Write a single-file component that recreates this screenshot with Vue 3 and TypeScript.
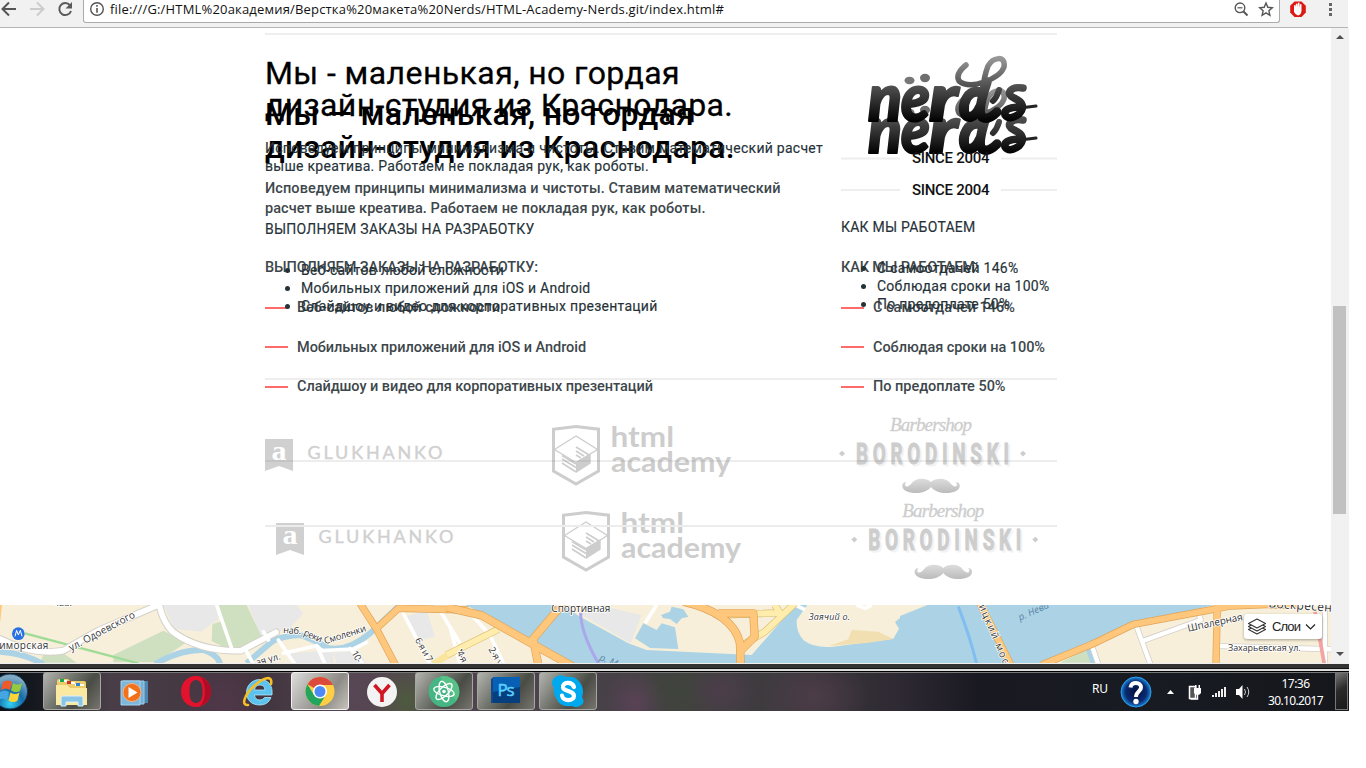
<script setup lang="ts">
interface Line { text: string; width: number }

// Spreads a line of text over an exact width by adjusting its letter spacing.
const vFit = {
  mounted(el: HTMLElement, binding: { value: number }) {
    const natural = el.getBoundingClientRect().width
    const count = (el.textContent ?? '').length
    el.style.letterSpacing = `${(binding.value - natural) / count}px`
  },
}

const address = 'file:///G:/HTML%20академия/Верстка%20макета%20Nerds/HTML-Academy-Nerds.git/index.html#'

const title: Line[] = [
  { text: 'Мы - маленькая, но гордая', width: 415 },
  { text: 'дизайн-студия из Краснодара.', width: 468 },
]
const intro: Line[] = [
  { text: 'Исповедуем принципы минимализма и чистоты. Ставим математический расчет', width: 558 },
  { text: 'выше креатива. Работаем не покладая рук, как роботы.', width: 384 },
]
const services: Line[] = [
  { text: 'Веб-сайтов любой сложности', width: 203 },
  { text: 'Мобильных приложений для iOS и Android', width: 289.5 },
  { text: 'Слайдшоу и видео для корпоративных презентаций', width: 356.5 },
]
const rules: Line[] = [
  { text: 'С самоотдачей 146%', width: 141.5 },
  { text: 'Соблюдая сроки на 100%', width: 172.5 },
  { text: 'По предоплате 50%', width: 132.5 },
]
const draftTitle: Line[] = [
  { text: 'Мы — маленькая, но гордая', width: 429 },
  { text: 'дизайн-студия из Краснодара.', width: 470 },
]
const draftIntro: Line[] = [
  { text: 'Исповедуем принципы минимализма и чистоты. Ставим математический', width: 515.5 },
  { text: 'расчет выше креатива. Работаем не покладая рук, как роботы.', width: 440.5 },
]
const draftServices: Line[] = [
  { text: 'Веб-сайтов любой сложности', width: 203 },
  { text: 'Мобильных приложений для iOS и Android', width: 289 },
  { text: 'Слайдшоу и видео для корпоративных презентаций', width: 356 },
]
const draftRules: Line[] = [
  { text: 'С самоотдачей 146%', width: 142 },
  { text: 'Соблюдая сроки на 100%', width: 172 },
  { text: 'По предоплате 50%', width: 132.5 },
]
const partnerRows = [
  { g: 'translate(0 0)', h: 'translate(0 0)', b: 'translate(0 0)' },
  { g: 'translate(11 84)', h: 'translate(10 86)', b: 'translate(12.3 86)' },
]
const tasks = [
  { id: 'explorer', state: 'open' },
  { id: 'player', state: '' },
  { id: 'opera', state: '' },
  { id: 'ie', state: '' },
  { id: 'chrome', state: 'active' },
  { id: 'yandex', state: '' },
  { id: 'atom', state: 'open' },
  { id: 'ps', state: 'open' },
  { id: 'skype', state: 'open' },
]
</script>

<template>
  <div class="screen">
    <header class="toolbar">
      <svg class="nav" width="83" height="28" viewBox="0 0 83 28" fill="none" stroke-width="2">
        <path d="M16 9H3M9 2.5 2.5 9 9 15.5" stroke="#555" />
        <path d="M30 9h13M37 2.5 43.5 9 37 15.5" stroke="#ccc" />
        <path d="M70 5.3A6 6 0 1 0 71 11" stroke="#5a5a5a" />
        <path d="M72 2v6.500h-6.500z" fill="#5a5a5a" />
      </svg>
      <div class="omnibox">
        <svg width="26" height="22" viewBox="0 0 26 22" fill="none" stroke="#555">
          <circle cx="13" cy="9" r="6.300" stroke-width="1.400" />
          <path d="M13 8v4.800M13 5v1.700" stroke-width="1.600" />
        </svg>
        <span v-fit="614" class="address">{{ address }}</span>
        <svg class="page-tools" width="50" height="22" viewBox="1230 0 50 22" fill="none" stroke="#555">
          <circle cx="1240" cy="7.800" r="4.800" stroke-width="1.400" />
          <path d="M1243.500 11.500l4 4" stroke-width="2" />
          <path d="M1237.500 7.800h5" stroke-width="1.200" />
          <path d="M1266 3l1.800 4.300 4.500.4-3.400 3.100 1 4.500-3.900-2.400-3.900 2.400 1-4.500-3.400-3.100 4.500-.4z" stroke-width="1.400" />
        </svg>
      </div>
      <svg width="68" height="27" viewBox="1280 0 68 27">
        <path d="M1294.500 1.500h7l4.300 4.300v6.800l-4.300 4.300h-7l-4.300-4.300V5.800z" fill="#dd1712" />
        <path d="M1294 9V5.500q1-1 1.500 0V8l.4-4q1-1 1.500 0v4l.5-5q1-1 1.600 0v5l.5-3.500q1-.8 1.500 0V11q-.5 4-3.500 4.500-2.500-.5-4-3.500z" fill="#fff" />
        <path d="M1329 3h3v3h-3zM1329 8h3v3h-3zM1329 13h3v3h-3z" fill="#666" />
      </svg>
    </header>

    <div class="viewport">
      <main class="page">
        <div class="live">
          <hr class="rule" />
          <div class="columns">
            <section>
              <h1><span v-for="l in title" :key="l.text" v-fit="l.width" class="line">{{ l.text }}</span></h1>
              <p><span v-for="l in intro" :key="l.text" v-fit="l.width" class="line">{{ l.text }}</span></p>
              <h2><span v-fit="269.500" class="line">ВЫПОЛНЯЕМ ЗАКАЗЫ НА РАЗРАБОТКУ</span></h2>
              <ul><li v-for="l in services" :key="l.text"><span v-fit="l.width" class="line">{{ l.text }}</span></li></ul>
            </section>
            <section>
              <svg class="brand" width="216" height="183" viewBox="841 35 216 183">
                <defs>
                  <linearGradient id="ink" gradientUnits="userSpaceOnUse" x1="0" y1="57" x2="0" y2="122">
                    <stop offset="0" stop-color="#999" />
                    <stop offset=".45" stop-color="#505050" />
                    <stop offset="1" stop-color="#000" />
                  </linearGradient>
                </defs>
                <path d="M841 158.500h59M1001 158.500h56M841 190h59M1001 190h56" stroke="#eee" stroke-width="2" />
                <g v-for="dy in [32, 0]" :key="dy" :transform="`translate(0 ${dy})`" fill="url(#ink)" stroke="url(#ink)">
                  <g class="script-letters" stroke-width="2.200" stroke-linejoin="round">
                    <text x="868" y="121" textLength="34" lengthAdjust="spacingAndGlyphs">n</text>
                    <text x="901" y="121" textLength="29" lengthAdjust="spacingAndGlyphs">e</text>
                    <text x="929" y="121" textLength="29" lengthAdjust="spacingAndGlyphs">r</text>
                  </g>
                  <ellipse cx="909.500" cy="80.500" rx="5" ry="3.800" stroke="none" fill="#777" />
                  <ellipse cx="925" cy="78" rx="5" ry="4.200" stroke="none" fill="#6e6e6e" />
                  <g fill="none" stroke-linecap="round" stroke-linejoin="round">
                    <path d="M979 92C967 90 963 104 964 111C966 121 975 118 980 107" stroke-width="10" />
                    <path d="M987 82C982 97 978 112 982 117Q988 121 997 112" stroke-width="9.500" />
                    <path d="M966 65Q955 74 959 81Q968 88 984 82Q1001 76 1004 67C1006 55 993 57 988 66Q984 76 982 94" stroke-width="5.500" />
                    <path d="M999 90Q997 97 993 101" stroke-width="6" />
                    <path d="M1023 88C1010 86 1005 94 1014 98Q1028 104 1019 114Q1009 121 1005 115Q1003 108 1018 107" stroke-width="7.500" />
                    <path d="M1012 108Q1024 108 1036 106" stroke-width="3" />
                  </g>
                </g>
                <g class="since">
                  <text x="912" y="163.300" textLength="77.500">SINCE 2004</text>
                  <text x="912" y="194.500" textLength="77.500">SINCE 2004</text>
                </g>
              </svg>
              <h2><span v-fit="134.500" class="line">КАК МЫ РАБОТАЕМ</span></h2>
              <ul><li v-for="l in rules" :key="l.text"><span v-fit="l.width" class="line">{{ l.text }}</span></li></ul>
            </section>
          </div>
          <hr class="rule rule-partners" />
          <svg class="partners" width="800" height="225" viewBox="257 380 800 225">
            <defs>
              <linearGradient id="hair" x1="0" y1="0" x2="0" y2="1">
                <stop offset="0" stop-color="#dcdcdc" /><stop offset="1" stop-color="#bbb" />
              </linearGradient>
            </defs>
            <g v-for="(row, i) in partnerRows" :key="i">
              <g :transform="row.g" fill="#d0d0d0">
                <path d="M265 439h28v32l-14-5-14 5z" />
                <text class="flag-letter" x="271.500" y="459.500" textLength="15" lengthAdjust="spacingAndGlyphs">a</text>
                <text class="wide-name" x="307.500" y="459" textLength="135">GLUKHANKO</text>
              </g>
              <g :transform="row.h" fill="#cdcdcd" stroke="#cdcdcd">
                <path d="M553.500 429.200 576 426.500l22.500 2.700v41.900L576 484l-22.500-12.900z" fill="none" stroke-width="3" />
                <path d="M554.500 449.500 576 436l21.500 13.500L576 462.500z" fill="none" stroke-width="1.300" />
                <path d="M576 462l14.700-8.500v10L576 473z" stroke="none" />
                <path d="M562 455.500l14 8.500M562 459l14 8.500M562 463l14 9M576 447l14 8.500M576 451l8 5M576 455l5 3" fill="none" stroke-width="1.700" />
                <g class="academy" stroke="none">
                  <text x="610.500" y="447" textLength="63.500" lengthAdjust="spacingAndGlyphs">html</text>
                  <text x="611" y="471.700" textLength="120" lengthAdjust="spacingAndGlyphs">academy</text>
                </g>
              </g>
              <g :transform="row.b" fill="#cdcdcd">
                <text class="barber" x="890" y="430.500" textLength="82">Barbershop</text>
                <text class="barber-name echo" transform="translate(858 466) scale(.64 1)" textLength="239">BORODINSKI</text>
                <text class="barber-name" transform="translate(856 464) scale(.64 1)" textLength="239">BORODINSKI</text>
                <path d="M842 450.800l3 2.800-3 2.800-3-2.800zM1023 450.800l3 2.800-3 2.800-3-2.800z" />
                <path d="M931 482C926 478 916 477 911 484C908 488 903 487 906 482C901 482 901 489 906 491C914 495 927 493 931 487C935 493 948 495 956 491C961 489 961 482 956 482C959 487 954 488 951 484C946 477 936 478 931 482Z" fill="url(#hair)" />
              </g>
            </g>
            <path d="M265 461h792" stroke="#777" stroke-opacity=".13" stroke-width="2" />
            <path d="M265 526h792" stroke="#ececec" stroke-width="2" />
          </svg>
        </div>

        <div class="draft">
          <section>
            <h1><span v-for="l in draftTitle" :key="l.text" v-fit="l.width" class="line">{{ l.text }}</span></h1>
            <p><span v-for="l in draftIntro" :key="l.text" v-fit="l.width" class="line">{{ l.text }}</span></p>
            <h2><span v-fit="273" class="line">ВЫПОЛНЯЕМ ЗАКАЗЫ НА РАЗРАБОТКУ:</span></h2>
            <ul><li v-for="l in draftServices" :key="l.text"><i></i><span v-fit="l.width" class="line">{{ l.text }}</span></li></ul>
          </section>
          <section class="draft-side">
            <h2><span v-fit="137.500" class="line">КАК МЫ РАБОТАЕМ:</span></h2>
            <ul><li v-for="l in draftRules" :key="l.text"><i></i><span v-fit="l.width" class="line">{{ l.text }}</span></li></ul>
          </section>
        </div>

        <div class="map">
          <svg width="1331" height="58" viewBox="0 15 3993 174" fill="none" stroke-linejoin="round">
            <path d="M0 15h3993v174H0z" fill="#f7efd9" />
            <g>
              <path d="M490 15h160l5 45-22 12-30 23-80-8zM745 15h145l20 25-40 45-85 30zM870 160l130-10v40H880zM1215 50l65-20 25 80-50 10zM1000 160l70-10 30 40h-90z" fill="#e8e8e8" />
              <path d="M650 15h90l45 95-50 40-50-2-50-25 2-50 28-10zM340 165l150-73 70 35-90 60H340zM130 165l60-5 40 28H120z" fill="#cfe0c0" />
              <path d="M0 155q75 5 130 38M465 192q80-45 145-42 45 15 50 42M740 190l70-60q20-20 90-25 45 15 85 40 60 10 125-45l90-85" stroke="#abd3e5" stroke-width="18" />
              <path d="M75 100 415 190" stroke="#9edb96" stroke-width="7" />
              <g stroke-linecap="round">
                <g stroke="#d4d1ca" stroke-width="23"><path d="M0 117q100 50 190 35 50-30 105-60l175-75M478 15q10 50 40 80 80 60 205 57l105-55" /></g>
                <g stroke="#fff" stroke-width="17"><path d="M0 117q100 50 190 35 50-30 105-60l175-75M478 15q10 50 40 80 80 60 205 57l105-55" /></g>
                <path d="M650 15l45 130M740 155l20 38M835 120l50 73M850 160l100-23 15 15 95-5 40-20M950 137l25 55M1050 145l40 48M1205 30l85 163M1310 15l70 115M790 95l15 25" stroke="#fff" stroke-width="11" />
              </g>
              <path d="M1080 10l50 78 58 110M1130 85l65-60 210 5" stroke="#dfa457" stroke-width="22" />
              <path d="M1080 10l50 78 58 110M1130 85l65-60 210 5" stroke="#ffc77c" stroke-width="18" />
              <path d="M1300 192l90-55" stroke="#f9e59b" stroke-width="20" />
              <path d="M0 70V15h6z" fill="#ffc77c" />
            </g>
            <g transform="translate(1350 0)">
              <path d="M35 10h1345v182H370L240 120 120 50z" fill="#abd3e5" />
              <path d="M330 10h710L905 165 590 150 535 130 390 50zM1075 10l-35 50q-2 35 20 60 30 25 90 20l180-24 17-30-12-20 45-36V10z" fill="#f7efd9" />
              <path d="M390 42 440 15l135 30-33 85z" fill="#e8e8e8" />
              <path d="M555 115l25-45 40 20 15-20 40 12 10 65-85-3zM633 45l27-10 5-15 35 8 15 22-20 5-15 17-20-15-20-2z" fill="#abd3e5" />
              <path d="M1135 138l60-20 10-28 80 5 45 22-80 12z" fill="#f1dfb2" />
              <path d="M0 80l30 112M65 45l55 60 40 85M620 15l-35 55M1220 15l25 10 20-10M1035 15l30 14" stroke="#fff" stroke-width="11" />
              <path d="M-10 165 145 88M815 45l180-7M1035 10 945 95l-75 45M975 15l15 25" stroke="#d9c077" stroke-width="22" />
              <path d="M-10 165 145 88M815 45l180-7M1035 10 945 95l-75 45M975 15l15 25" stroke="#ffedae" stroke-width="18" />
              <path d="M-10 22l105 24 145 82 135 75M242 125l98-115M250 120l15 75M700 5q150 35 170 125l2 65M805 40h105l4 70-45 45" stroke="#dfa457" stroke-width="25" />
              <path d="M-10 22l105 24 145 82 135 75M242 125l98-115M250 120l15 75M700 5q150 35 170 125l2 65M805 40h105l4 70-45 45" stroke="#ffc77c" stroke-width="21" />
              <path d="M392 38q0 60 55 155" stroke="#aaa7eb" stroke-width="9" />
            </g>
            <g transform="translate(2700 0)">
              <path d="M0 10h960L700 75 425 192H0z" fill="#abd3e5" />
              <path d="M0 10h95L45 30 0 48z" fill="#f7efd9" />
              <path d="M480 188l75-38 20 38z" fill="#cfe0c0" />
              <path d="M175 20q35 90 55 172" stroke="#82bdf0" stroke-width="9" />
              <path d="M553 140l20 52h25l-25-60z" fill="#abd3e5" />
              <path d="M575 135l20 58M710 80l42 115M722 125l180-65-10-30M960 138l340 10M1275 25v165" stroke="#d4d1ca" stroke-width="18" />
              <path d="M575 135l20 58M710 80l42 115M722 125l180-65-10-30M960 138l340 10M1275 25v165" stroke="#fff" stroke-width="13" />
              <path d="M240 10l95 190M425 195l150-62 125-60 240-45 50-10 190-8M952 10l-4 185M1110 15h80" stroke="#dfa457" stroke-width="22" />
              <path d="M240 10l95 190M425 195l150-62 125-60 240-45 50-10 190-8M952 10l-4 185M1110 15h80" stroke="#ffc77c" stroke-width="18" />
              <path d="M1245 35l28 158" stroke="#f4a3a0" stroke-width="11" />
            </g>
            <circle cx="55" cy="101" r="19" fill="#2871e3" />
            <path d="M45 109l5-18 5 14 6-14 5 18" stroke="#fff" stroke-width="3" />
            <g class="map-labels">
              <text x="-22" y="146" textLength="167">риморская</text>
              <text x="160" y="18" font-size="28">чва.</text>
              <text transform="translate(213 154) rotate(-28)" textLength="220">ул. Одоевского</text>
              <g font-size="28">
                <text transform="translate(849 99) rotate(4)" textLength="54">наб.</text>
                <text transform="translate(909 105) rotate(23)" textLength="58">реки</text>
                <text transform="translate(976 133) rotate(-18)" textLength="130">Смоленки</text>
                <text transform="translate(770 197) rotate(-15)" textLength="76">ая ул.</text>
                <text transform="translate(1054 158) rotate(62)" textLength="36">10-</text>
                <text transform="translate(1244 120) rotate(60)" textLength="78">6-я и 7</text>
                <text x="1374" y="168">4</text>
                <text transform="translate(1370 158) rotate(62)" textLength="36">4-я</text>
                <text transform="translate(1465 148) rotate(60)" textLength="58">2-я у</text>
              </g>
              <text x="1654" y="35" textLength="177">Спортивная</text>
              <text x="2426" y="60" font-style="italic" font-size="27" textLength="124">Заячий о.</text>
              <g class="water-label">
                <text transform="translate(1796 180) rotate(22)">р. Мойка</text>
                <text transform="translate(3060 62) rotate(-24)">р. Нева</text>
              </g>
              <text transform="translate(2936 18) rotate(67)" textLength="190">ицкий мос</text>
              <text transform="translate(3565 95) rotate(-12)" textLength="168">Шпалерная</text>
              <text x="3684" y="154" font-size="27" textLength="218">Захарьевская ул.</text>
              <text transform="translate(3805 22) rotate(4)" font-size="36" textLength="190">Воскресен</text>
            </g>
          </svg>
          <button class="layers">
            <svg width="20" height="18" viewBox="0 0 20 18" fill="#fff" stroke="#333" stroke-width="1.100" stroke-linejoin="round">
              <path d="M1.500 11.500 10 7l8.500 4.500L10 16z" /><path d="M1.500 8.500 10 4l8.500 4.500L10 13z" /><path d="M1.500 5.500 10 1l8.500 4.500L10 10z" />
            </svg>
            <span v-fit="28">Слои</span>
            <svg width="11" height="8" viewBox="0 0 11 8" fill="none" stroke="#222" stroke-width="1.200"><path d="M1 1.500l4.500 4.500L10 1.500" /></svg>
          </button>
        </div>
      </main>
      <aside class="scrollbar"><b class="up"></b><div class="thumb"></div><b class="down"></b></aside>
    </div>

    <div class="window-edge"></div>

    <footer class="taskbar">
      <svg class="start" width="43" height="40" viewBox="0 671 43 40">
        <defs>
          <radialGradient id="orb" cx=".5" cy=".85" r=".75"><stop offset="0" stop-color="#34d2f4" /><stop offset=".5" stop-color="#156aa9" /><stop offset="1" stop-color="#7fa9c3" /></radialGradient>
        </defs>
        <circle cx="10" cy="691.500" r="17.500" fill="url(#orb)" stroke="#12334e" />
        <path d="M3 682q5-3 9 0l-2 8q-4-3-9 0z" fill="#ef5a28" /><path d="M13 683q5 3 9 0l-2 8q-4 2.500-9-.5z" fill="#95c93f" />
        <path d="M0 692q5-3 9 0l-2 8q-4-3-8 0z" fill="#46a6e4" /><path d="M10.500 692.500q4 3 9 0l-2 8q-4 3-9 0z" fill="#fcd436" />
      </svg>
      <nav class="tasks">
        <div v-for="t in tasks" :key="t.id" class="task" :class="t.state">
          <svg width="36" height="36" viewBox="0 0 36 36">
            <g v-if="t.id === 'explorer'">
              <path d="M3 8q0-2 2-2h9l2 2h14q2 0 2 2v20H3z" fill="#eccd69" /><path d="M5 7h8v2H5zM13 9h8v2h-8zM21 11h9v2h-9z" fill="#fff" />
              <path d="M6 6h4v3H6z" fill="#1aa64a" /><path d="M13 8h4v3h-4z" fill="#cc3527" /><path d="M22 10h4v3h-4z" fill="#2f82cf" />
              <path d="M2 12h11l3 3h17v17H2z" fill="#fbe9a2" /><path d="M7 33v-8q0-2 2-2h18q2 0 2 2v8h-5v-4H12v4z" fill="#8ac5e6" stroke="#d9f1fb" />
            </g>
            <g v-else-if="t.id === 'player'">
              <path d="M8 8h24v22H8z" fill="#4d86b1" /><path d="M7 8h21v23H7z" fill="#76b0d8" stroke="#9fcae4" /><path d="M5 8h19v24H5z" fill="#7eb7dc" stroke="#a6d3ed" />
              <circle cx="16" cy="19.500" r="9" fill="#f2711c" stroke="#fbb47a" /><path d="M12.500 14v11l9-5.500z" fill="#fff" />
            </g>
            <g v-else-if="t.id === 'opera'"><path fill-rule="evenodd" d="M18 3C9 3 3 10 3 18.500S9 34 18 34s15-7 15-15.500S27 3 18 3zm0 4c5 0 6.500 5 6.500 11.500S23 30 18 30s-6.500-5-6.500-11.500S13 7 18 7z" fill="#e3122d" /><path d="M22 4C29 6 33 12 33 18.500S29 31 22 33Q27 28 27 18.500T22 4z" fill="#af0d27" /></g>
            <g v-else-if="t.id === 'ie'">
              <path fill-rule="evenodd" d="M32 22H14.500q.5 5 5.500 5 3 0 4.500-2.500H31Q28 32 20 32C11 32 6.500 26.500 6.500 19.500S12 6.500 20 6.500 33 12 32 22zM14.500 17h10.500q-.5-5-5-5-4.800 0-5.500 5z" fill="#5cc3ee" stroke="#b2e7fa" stroke-width=".8" />
              <path d="M8 32C1 33 4 22 14 13S33 2 31 11" fill="none" stroke="#f6bf25" stroke-width="2.600" stroke-linecap="round" />
            </g>
            <g v-else-if="t.id === 'chrome'">
              <circle cx="18" cy="18.500" r="14.500" fill="#ffce42" /><path d="M18 18.500 5.500 11.200A14.500 14.500 0 0 1 31 12H18z" fill="#dc4a3c" /><path d="M5.500 11.200A14.500 14.500 0 0 0 17 33l6.500-10.500L12 22z" fill="#24a55d" />
              <circle cx="18" cy="18.500" r="7" fill="#fff" /><circle cx="18" cy="18.500" r="5.500" fill="#4c8bf5" />
            </g>
            <g v-else-if="t.id === 'yandex'"><circle cx="18" cy="19" r="15" fill="#f3f3f3" /><path d="M10.500 12 18 20.500 25.500 12M18 20v9" fill="none" stroke="#d01622" stroke-width="3.600" /></g>
            <g v-else-if="t.id === 'atom'">
              <circle cx="18" cy="18.500" r="15.500" fill="#45b583" /><path d="M14 3.500A15.500 15.500 0 0 1 30 28z" fill="#66c98b" opacity=".6" />
              <g fill="none" stroke="#fff" stroke-width="1.400"><ellipse v-for="a in [15, 75, 135]" :key="a" cx="18" cy="18.500" rx="10.500" ry="4.300" :transform="`rotate(${a} 18 18.500)`" /></g><circle cx="18" cy="18.500" r="1.800" fill="#fff" />
            </g>
            <g v-else-if="t.id === 'ps'"><path d="M3 6 6 4h24l2 2v24H3z" fill="#124984" /><path d="M5 4h27v26H5z" fill="#0860b4" /><path d="M5 19l27-5v16H5z" fill="#063e7e" /><text class="ps-mark" x="9.500" y="22.500" textLength="17">Ps</text></g>
            <g v-else><path d="M4 5Q10 0 16 4Q27 2 32 13Q34 19 32 24Q36 30 30 33Q26 35 22 33Q10 35 6 25Q3 20 4 15Q0 10 4 5Z" fill="#00a9ed" /><path d="M24 14C22 8 12 9 13 14.500C14 19 24 17 24 23C24 28 13 29 12 22.500" fill="none" stroke="#fff" stroke-width="4.200" stroke-linecap="round" /></g>
          </svg>
        </div>
      </nav>
      <div class="tray">
        <span v-fit="16" class="lang">RU</span>
        <svg width="134" height="40" viewBox="1120 671 134 40">
          <defs><radialGradient id="help"><stop offset="0" stop-color="#06103a" /><stop offset=".7" stop-color="#0b2b72" /><stop offset="1" stop-color="#1c83d6" /></radialGradient></defs>
          <circle cx="1136" cy="692" r="15" fill="url(#help)" stroke="#2a9fe9" />
          <path d="M1130.500 687.500C1131 681 1141.500 682 1141 687.500C1141 691.500 1136 691.500 1136 697" fill="none" stroke="#fff" stroke-width="4" /><circle cx="1136" cy="701.500" r="2.700" fill="#fff" />
          <path d="M1167 694h7l-3.500-4z" fill="#fff" />
          <path d="M1189.500 686.500h6v12h-6z" fill="#555" stroke="#fff" stroke-width="1.500" /><path d="M1194 688h7v5q-1 2-3.500 2t-3.500-2zM1195 685h1.500v4h-1.500zM1198.500 685h1.500v4h-1.500z" fill="#fff" /><path d="M1197.500 694v5h-7" fill="none" stroke="#fff" stroke-width="1.500" />
          <path d="M1212 695h2v2h-2zM1215 693h2v4h-2zM1218 691h2v6h-2zM1221 689h2v8h-2zM1224 687h2v10h-2z" fill="#eee" />
          <path d="M1236 689h3l3.500-4v14l-3.500-4h-3z" fill="#fff" /><path d="M1244.500 689q2 3 0 6M1247 687q3.500 5 0 10" fill="none" stroke="#ccc" />
        </svg>
        <div class="clock"><span v-fit="28">17:36</span><span v-fit="55">30.10.2017</span></div>
        <div class="show-desktop"></div>
      </div>
    </footer>
  </div>
</template>

<style>
html, body { background: #fff; overflow: hidden; }
</style>

<style scoped>
.screen { width: 1349px; height: 711px; display: flex; flex-direction: column; overflow: hidden; background: #fff; font-family: Roboto, "Liberation Sans", sans-serif; }
h1, h2, p, ul { margin: 0; padding: 0; }
svg { display: block; flex: none; }

.toolbar { width: 1348px; height: 27px; flex: none; display: flex; background: #f1f1f1; border-bottom: 1px solid #b5b5b5; }
.omnibox { box-sizing: border-box; width: 1197px; height: 23px; flex: none; display: flex; background: #fff; border: 1px solid #aaa; border-top: 0; border-radius: 0 0 3px 3px; }
.address { align-self: flex-start; font: 13px/19px "Open Sans", "Noto Sans", sans-serif; color: #111; white-space: nowrap; }
.page-tools { margin-left: auto; margin-right: -1px; }

.viewport { height: 635px; flex: none; display: flex; }
.page { position: relative; width: 1331px; height: 635px; overflow: hidden; }
.line { display: block; width: max-content; white-space: pre; }
.live { position: relative; z-index: 1; width: 792px; height: 577px; margin-left: 265px; padding-top: 5px; box-sizing: border-box; color: #263238; }
.rule { height: 2px; margin: 0; border: 0; background: #eee; }
.columns { display: grid; grid-template-columns: 576px 216px; height: 343px; }
.live h1 { margin-top: 22px; font-size: 32px; line-height: 32px; font-weight: 400; color: #000; -webkit-text-stroke: .3px #000; }
.live p { margin-top: 18px; font-size: 14px; line-height: 18px; }
.live h2 { font-size: 14px; line-height: 18px; font-weight: 400; }
.live p + h2 { margin-top: 45px; }
.live ul { margin-top: 23px; list-style: none; font-size: 14px; line-height: 18px; }
.live li { display: flex; align-items: center; }
.live li::before { content: ""; width: 5px; height: 5px; margin: 1px 11px 0 20px; border-radius: 50%; background: #263238; }
.live p, .live h2, .live ul { -webkit-text-stroke: .15px #263238; }
.script-letters { font: italic 900 67px Lato, sans-serif; }
.since { font-size: 15px; font-weight: 500; fill: #111; }
.partners { margin-left: -8px; }
.flag-letter { font: bold 28px "Liberation Serif", serif; fill: #fff; }
.wide-name { font: 18px Lato, sans-serif; stroke: #d0d0d0; stroke-width: .4; }
.academy { font: 700 28px Lato, sans-serif; }
.barber { font: italic 19px "Liberation Serif", serif; stroke: #cdcdcd; stroke-width: .3; }
.barber-name { font: 700 29.5px Roboto, sans-serif; stroke: #cdcdcd; stroke-width: 1; }
.echo { fill: #f3f3f3; stroke: #f3f3f3; }

.draft { position: absolute; top: 70px; left: 265px; width: 792px; display: grid; grid-template-columns: 576px 216px; color: #3d474b; }
.draft h1 { font-size: 32px; line-height: 32.5px; font-weight: 500; color: #000; }
.draft p { margin-top: 16px; font-size: 14.5px; line-height: 20px; font-weight: 500; }
.draft h2 { margin-top: 39px; font-size: 14.5px; line-height: 20px; font-weight: 500; }
.draft .draft-side h2 { margin-top: 160px; }
.draft ul { margin-top: 10px; list-style: none; }
.draft li { display: flex; align-items: center; gap: 9.5px; height: 39.5px; font-size: 14.5px; font-weight: 500; }
.draft li i { width: 22.5px; height: 2px; background: #ff6b6b; }

.map { position: relative; height: 58px; }
.map-labels { font: 30px "Open Sans", "Noto Sans", sans-serif; fill: #333; stroke: #fff; stroke-width: 5; paint-order: stroke; }
.water-label { font-style: italic; font-size: 29px; fill: #5b84a5; stroke: none; }
.layers { position: absolute; right: 9px; top: 9px; box-sizing: border-box; width: 78px; height: 25px; display: flex; align-items: center; gap: 5px; padding: 0 4px 0 3px; border: 0; border-radius: 3px; background: #fff; box-shadow: 0 1px 3px #0005; font: 13px "Liberation Sans", Arial, sans-serif; color: #222; }

.scrollbar { width: 17px; padding-right: 1px; display: flex; flex-direction: column; align-items: center; background: #f1f1f1; }
.scrollbar b { width: 0; height: 0; border: 4px solid transparent; }
.scrollbar .up { border-top-width: 0; border-bottom-color: #505050; margin-top: 7px; }
.thumb { width: 13px; height: 208px; margin-top: 267px; background: #c1c1c1; }
.scrollbar .down { border-bottom-width: 0; border-top-color: #505050; margin-top: 138px; }

.window-edge { height: 8px; flex: none; box-sizing: border-box; background: #333; border-top: 1px solid #eee; border-bottom: 2px solid #ddd; box-shadow: inset 0 -1px #111; }
.taskbar { height: 40px; flex: none; display: flex; box-sizing: border-box; box-shadow: inset 0 1px #000, inset 0 2px #777;
  background:
    radial-gradient(ellipse 30px 35px at 635px 32px, #644260aa, transparent),
    radial-gradient(ellipse 36px 30px at 720px 20px, #4c3d4b, transparent),
    radial-gradient(ellipse 55px 40px at 815px 25px, #57404faa, transparent),
    radial-gradient(ellipse 65px 45px at 680px 20px, #3f453b, transparent),
    radial-gradient(ellipse 38px 40px at 407px 30px, #4e5a3f, transparent),
    radial-gradient(ellipse 45px 45px at 225px 30px, #58384eaa, transparent),
    linear-gradient(90deg, #0b1119 0, #171a20 40px, #493e47 110px, #40343d 260px, #574653 350px, #4a434a 560px, #3d3a3e 780px, #2e2932 900px, #191922 980px, #181b22 1140px, #15171c 1349px); }
.tasks { display: flex; gap: 4px; padding-top: 1px; }
.task { width: 58px; height: 38px; box-sizing: border-box; display: flex; align-items: center; justify-content: center; border: 1px solid transparent; border-radius: 3px; }
.task.open { border-color: #a5a5a1; background: linear-gradient(125deg, #b4b4af 0, #777a72 35%, #494c45 65%, #77746e); }
.task.active { border-color: #f1f1ef; background: linear-gradient(125deg, #ddd, #aaa9a5 40%, #8e8b86 65%, #c5c3bb); }
.ps-mark { font: 17px "Open Sans", sans-serif; fill: #5bd1ff; stroke: #5bd1ff; stroke-width: .5; }
.tray { margin-left: auto; display: flex; color: #fff; }
.lang { align-self: flex-start; margin: 9px 12px 0 0; font: 12px/18px "Noto Sans", sans-serif; white-space: nowrap; }
.clock { width: 55px; margin-left: 14px; padding-top: 4px; display: flex; flex-direction: column; align-items: center; font: 12px/17px "Noto Sans", sans-serif; white-space: nowrap; }
.show-desktop { width: 13px; height: 38px; margin: 1px 1px 0 12px; box-sizing: border-box; border: 1px solid #777; background: linear-gradient(150deg, #777, #2b2b2b 45%, #191919); }
</style>
